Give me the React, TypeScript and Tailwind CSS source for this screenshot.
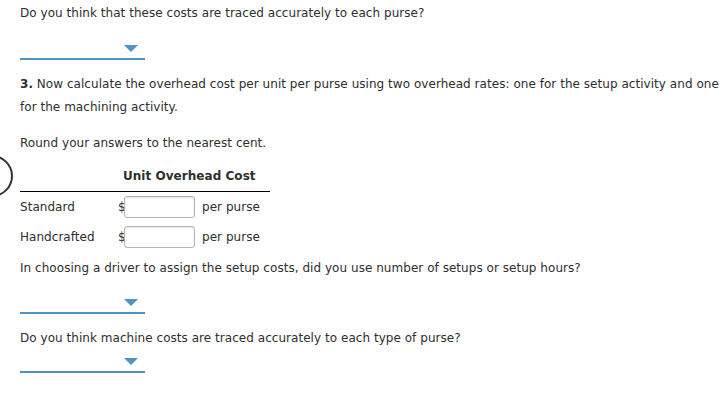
import React from "react";

function Dropdown({ h }: { h: string }) {
  return (
    <div className={`flex w-[125px] items-end justify-end border-b-2 border-[#5093c2] pb-[6px] pr-[7px] ${h}`}>
      <svg width="14" height="7" viewBox="0 0 14 7" className="block">
        <polygon points="0,0 14,0 7,7" fill="#5093c2" />
      </svg>
    </div>
  );
}

function Row({ label }: { label: string }) {
  return (
    <div className="flex h-[30px] items-center">
      <span className="w-[98px]">{label}</span>
      <span className="w-[6px]">$</span>
      <div className="h-[22px] w-[71px] rounded-[3px] border border-[#b5b5b5] bg-white shadow-[inset_0_1px_2px_rgba(0,0,0,0.12)]" />
      <span className="ml-[7px]">per purse</span>
    </div>
  );
}

export default function App() {
  return (
    <div
      className="relative min-h-[403px] w-[724px] overflow-hidden bg-white pl-5 pt-[2px] text-[12px] leading-[23px] tracking-[0.04px] text-[#2e2e2e]"
      style={{ fontFamily: '"DejaVu Sans", Verdana, sans-serif' }}
    >
      <p className="whitespace-nowrap">Do you think that these costs are traced accurately to each purse?</p>
      <Dropdown h="h-[35px]" />
      <p className="mt-[13px] whitespace-nowrap">
        <span className="block">
          <b>3.</b> Now calculate the overhead cost per unit per purse using two overhead rates: one for the setup activity and one
        </span>
        <span className="block">for the machining activity.</span>
      </p>
      <p className="mt-[13px] whitespace-nowrap">Round your answers to the nearest cent.</p>
      <div className="mt-[10px] w-[250px]">
        <div className="border-b border-black pb-[3px] pl-[103px] font-bold">Unit Overhead Cost</div>
        <Row label="Standard" />
        <Row label="Handcrafted" />
      </div>
      <p className="mt-[5px] whitespace-nowrap">
        In choosing a driver to assign the setup costs, did you use number of setups or setup hours?
      </p>
      <Dropdown h="h-[34px]" />
      <p className="mt-[13px] whitespace-nowrap">Do you think machine costs are traced accurately to each type of purse?</p>
      <Dropdown h="h-[23px]" />
      <div className="absolute left-[-29px] top-[155px] h-[42px] w-[42px] rounded-full border-[2.5px] border-[#333]" />
    </div>
  );
}
